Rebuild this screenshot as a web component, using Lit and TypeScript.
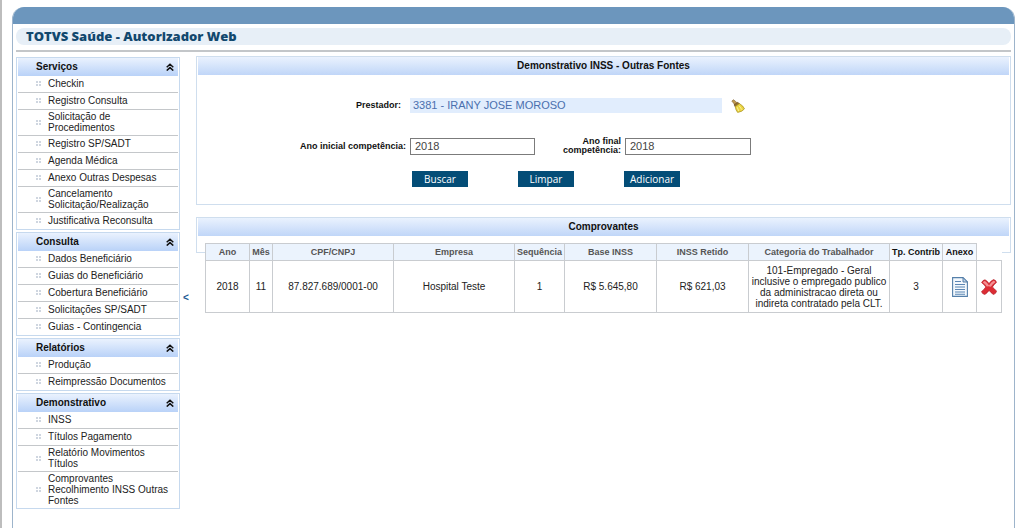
import { LitElement, html, css, svg } from "lit";
import { customElement, state } from "lit/decorators.js";

interface MenuGroup {
  title: string;
  items: string[];
}

const MENU: MenuGroup[] = [
  {
    title: "Serviços",
    items: [
      "Checkin",
      "Registro Consulta",
      "Solicitação de Procedimentos",
      "Registro SP/SADT",
      "Agenda Médica",
      "Anexo Outras Despesas",
      "Cancelamento Solicitação/Realização",
      "Justificativa Reconsulta",
    ],
  },
  {
    title: "Consulta",
    items: [
      "Dados Beneficiário",
      "Guias do Beneficiário",
      "Cobertura Beneficiário",
      "Solicitações SP/SADT",
      "Guias - Contingencia",
    ],
  },
  { title: "Relatórios", items: ["Produção", "Reimpressão Documentos"] },
  {
    title: "Demonstrativo",
    items: [
      "INSS",
      "Títulos Pagamento",
      "Relatório Movimentos Títulos",
      "Comprovantes Recolhimento INSS Outras Fontes",
    ],
  },
];

const ROWS = [
  {
    ano: "2018",
    mes: "11",
    doc: "87.827.689/0001-00",
    empresa: "Hospital Teste",
    seq: "1",
    base: "R$ 5.645,80",
    retido: "R$ 621,03",
    categoria:
      "101-Empregado - Geral inclusive o empregado publico da administracao direta ou indireta contratado pela CLT.",
    contrib: "3",
  },
];

@customElement("side-menu")
class SideMenu extends LitElement {
  @state() private closed: string[] = [];

  static styles = css`
    :host {
      display: flex;
      flex-direction: column;
      gap: 2px;
    }
    .group {
      border: 1px solid #c6d9ee;
      background: #fff;
    }
    .head {
      display: flex;
      align-items: center;
      justify-content: space-between;
      box-sizing: border-box;
      width: 100%;
      height: 18px;
      margin: 0;
      padding: 0 4px 1px 18px;
      border: 0;
      border-left: 1px solid #fff;
      border-right: 1px solid #fff;
      background: linear-gradient(#eaf2fe, #b9d2f8);
      color: #111;
      font: bold 10px/16px "Liberation Sans", Arial, sans-serif;
      cursor: pointer;
    }
    .chevron {
      width: 8px;
      height: 8px;
    }
    .list {
      list-style: none;
      margin: 0;
      padding: 0 1px;
    }
    .item {
      display: flex;
      align-items: center;
      gap: 7px;
      box-sizing: border-box;
      min-height: 17px;
      padding: 1px 8px 2px 18px;
      border-bottom: 1px solid #c4c7ca;
    }
    .item:last-child {
      min-height: 16px;
      border-bottom: 0;
    }
    .dot {
      flex: none;
      width: 5px;
      height: 5px;
    }
    .link {
      color: #222;
      text-decoration: none;
      font: 10px/11px "Liberation Sans", Arial, sans-serif;
    }
  `;

  private toggle(title: string) {
    this.closed = this.closed.includes(title)
      ? this.closed.filter((t) => t !== title)
      : [...this.closed, title];
  }

  render() {
    return MENU.map(
      (g) => html`<section class="group">
        <button class="head" @click=${() => this.toggle(g.title)}>
          ${g.title}
          <svg class="chevron" viewBox="0 0 8 8" fill="none" stroke="#111" stroke-width="1.5">
            <path d="M.7 4.2 4 1.2l3.3 3M.7 7.6 4 4.6l3.3 3" />
          </svg>
        </button>
        ${this.closed.includes(g.title)
          ? null
          : html`<ul class="list">
              ${g.items.map(
                (i) => html`<li class="item">
                  <svg class="dot" viewBox="0 0 5 5" fill="#cfd6e0">
                    <path d="M0 0h2v2H0zM3 0h2v2H3zM0 3h2v2H0zM3 3h2v2H3z" />
                  </svg>
                  <a class="link" href="#">${i}</a>
                </li>`
              )}
            </ul>`}
      </section>`
    );
  }
}

const broomIcon = svg`
  <path d="M.8 2 2.600.7 6.500 4.200 4.200 6.200Z" fill="#c09a50" stroke="#80602c" stroke-width=".6" />
  <path d="M3 5.800 6.800 3.200 8.600 5 4.400 8Z" fill="#94702f" stroke="#6a4c1c" stroke-width=".6" />
  <path d="M4.200 7.600 8.400 4.600Q12 6.500 13.500 9.800 11.500 12.800 6.600 13.400 4.600 11 4.200 7.600Z" fill="#ead440" stroke="#a58e22" stroke-width=".7" />
  <path d="M6.200 8.200 7.800 12.200M8.200 6.800 11 10.800" stroke="#fbf3a0" stroke-width=".9" fill="none" />
`;

const sheetIcon = svg`
  <path d="M.6.6H11L15.400 5V19.400H.6Z" fill="#f3f8fd" stroke="#5580aa" stroke-width="1.100" />
  <path d="M11 .6V5h4.400Z" fill="#c3d8ec" stroke="#4a74a0" stroke-width=".9" />
  <path d="M3 4.500h6M3 7.500h10M3 10h10M3 12.500h10M3 15h10M3 17.200h10" stroke="#5b86b4" stroke-width="1.100" />
`;

const crossIcon = svg`
  <path d="M.6 3.600Q1.800 1 4 .8 6.400 2 8 4.600 10 1.600 12.600.6 15 1.200 15.500 3.400 13.200 5 11.400 8 13.600 10 15.600 12.200 14.800 15 12.400 15.500 10 13.800 8.100 11.400 6.200 14 3.800 15.500 1.200 15 .5 12.600 3 10.800 4.800 8 3 5.400.6 3.600Z" fill="#dc2c34" stroke="#b3202a" stroke-width=".7" />
  <path d="M1.800 3.500Q2.600 2 3.900 1.900 6 3.200 8 6.400 10.200 3 12.600 1.700 14 2 14.300 3.200 11.600 4.800 9.800 7.800 7.500 6.600 5.800 7.600 4.300 5 1.800 3.500Z" fill="#f58f92" />
`;

@customElement("app-root")
class AppRoot extends LitElement {
  @state() private menuOpen = true;

  static styles = css`
    :host {
      display: block;
      box-sizing: border-box;
      min-height: 100vh;
      padding: 7px 8px 0 10px;
      border-left: 2px solid #bdbdbd;
      background: #fff;
      color: #222;
      font: 10px/11px "Liberation Sans", Arial, sans-serif;
    }
    .frame {
      box-sizing: border-box;
      min-height: calc(100vh - 7px);
      border: 1px solid #9db4cb;
      border-top: 0;
      border-bottom: 0;
      border-radius: 12px 12px 0 0;
      overflow: hidden;
    }
    .bar {
      height: 17px;
      background: #6c96bd;
    }
    .body {
      padding: 4px 3px 0;
    }
    .title {
      margin: 0;
      padding: 0 10px;
      border-radius: 8px;
      background: #e7eff7;
      color: #12486e;
      font: 800 13px/17px "Open Sans", Verdana, sans-serif;
    }
    .rule {
      height: 2px;
      margin: 5px 0 4px;
      background: #c3c6c9;
    }
    .columns {
      display: flex;
      align-items: flex-start;
    }
    .menu {
      flex: none;
      width: 164px;
      margin-top: 1px;
    }
    .fold {
      flex: none;
      width: 16px;
      margin-top: 235px;
      padding: 0 5px 0 1px;
      border: 0;
      background: none;
      color: #1c5a94;
      font: bold 10px/13px "Liberation Sans", Arial, sans-serif;
      cursor: pointer;
    }
    .main {
      flex: 1;
      min-width: 0;
      display: flex;
      flex-direction: column;
      gap: 12px;
    }
    .panel {
      border: 1px solid #cfdeee;
    }
    .caption {
      margin: 0 1px;
      background: linear-gradient(#eaf2fe, #c0d6f8);
      color: #111;
      text-align: center;
      font: bold 10px/18px "Liberation Sans", Arial, sans-serif;
    }
    .form {
      display: grid;
      grid-template-columns: 209px 125px 82px 126px 1fr;
      column-gap: 4px;
      align-items: center;
      padding: 23px 0 17px;
    }
    .label {
      text-align: right;
      color: #111;
      font: bold 9px/9px "Liberation Sans", Arial, sans-serif;
    }
    .label-wide {
      padding-right: 5px;
    }
    .provider {
      display: flex;
      align-items: center;
      gap: 9px;
      grid-column: 2 / -1;
    }
    .field {
      box-sizing: border-box;
      width: 100%;
      height: 17px;
      padding: 0 4px;
      border: 1px solid #7b7b7b;
      border-radius: 0;
      background: #fff;
      color: #444;
      font: 11px/15px "Liberation Sans", Arial, sans-serif;
    }
    .readonly {
      width: 312px;
      height: 15px;
      padding: 0 3px;
      border: 0;
      background: #e1edfd;
      color: #4a6fae;
    }
    .years {
      margin-top: 24px;
    }
    .actions {
      grid-column: 2 / -1;
      display: flex;
      gap: 50px;
      margin: 16px 0 0 2px;
    }
    .action {
      width: 56px;
      height: 16px;
      padding: 0;
      border: 0;
      background: #044d77;
      color: #fff;
      font: 10px/16px "Open Sans", sans-serif;
      cursor: pointer;
    }
    .icon-button {
      display: inline-flex;
      padding: 0;
      border: 0;
      background: none;
      vertical-align: middle;
      cursor: pointer;
    }
    .results {
      height: 34px;
    }
    .grid {
      width: calc(100% - 16px);
      margin: 7px 8px 0;
      border-collapse: collapse;
      table-layout: fixed;
      background: #fff;
      text-align: center;
    }
    .th {
      height: 16px;
      padding: 0;
      border: 1px solid #c9ccd0;
      background: #ebf3fd;
      color: #555;
      font-size: 9px;
      font-weight: bold;
      white-space: nowrap;
    }
    .th-dark {
      background: #f3f8fe;
      color: #111;
    }
    .td {
      height: 51px;
      padding: 0 1px;
      border: 1px solid #c9ccd0;
    }
    .td-icon {
      padding: 0;
    }
    .sheet {
      width: 16px;
      height: 20px;
      display: block;
    }
    .cross {
      width: 16px;
      height: 16px;
      display: block;
    }
    .broom {
      width: 14px;
      height: 14px;
      display: block;
    }
    .c-ano { width: 44px; }
    .c-mes { width: 23px; }
    .c-doc { width: 121px; }
    .c-seq { width: 50px; }
    .c-val { width: 92px; }
    .c-cat { width: 141px; }
    .c-con { width: 53px; }
    .c-ane { width: 34px; }
    .c-del { width: 25px; }
  `;

  render() {
    return html`<div class="frame">
      <div class="bar"></div>
      <div class="body">
        <h1 class="title">TOTVS Saúde - Autorizador Web</h1>
        <div class="rule"></div>
        <div class="columns">
          ${this.menuOpen ? html`<side-menu class="menu"></side-menu>` : null}
          <button class="fold" @click=${() => (this.menuOpen = !this.menuOpen)}>
            ${this.menuOpen ? "<" : ">"}
          </button>
          <main class="main">
            <section class="panel">
              <h2 class="caption">Demonstrativo INSS - Outras Fontes</h2>
              <form class="form" @submit=${(e: Event) => e.preventDefault()}>
                <label class="label label-wide" for="prestador">Prestador:</label>
                <div class="provider">
                  <input class="field readonly" id="prestador" readonly value="3381 - IRANY JOSE MOROSO" />
                  <button class="icon-button" type="reset" aria-label="Limpar prestador">
                    <svg class="broom" viewBox="0 0 14 14">${broomIcon}</svg>
                  </button>
                </div>
                <label class="label years" for="inicial">Ano inicial competência:</label>
                <input class="field years" id="inicial" value="2018" />
                <label class="label years" for="final">Ano final<br />competência:</label>
                <input class="field years" id="final" value="2018" />
                <div class="actions">
                  <button class="action" type="submit">Buscar</button>
                  <button class="action" type="reset">Limpar</button>
                  <button class="action" type="button">Adicionar</button>
                </div>
              </form>
            </section>
            <section class="panel results">
              <h2 class="caption">Comprovantes</h2>
              <table class="grid">
                <colgroup>
                  <col class="c-ano" />
                  <col class="c-mes" />
                  <col class="c-doc" />
                  <col />
                  <col class="c-seq" />
                  <col class="c-val" />
                  <col class="c-val" />
                  <col class="c-cat" />
                  <col class="c-con" />
                  <col class="c-ane" />
                  <col class="c-del" />
                </colgroup>
                <thead>
                  <tr>
                    ${["Ano", "Mês", "CPF/CNPJ", "Empresa", "Sequência", "Base INSS", "INSS Retido", "Categoria do Trabalhador"].map(
                      (h) => html`<th class="th">${h}</th>`
                    )}
                    <th class="th th-dark">Tp. Contrib</th>
                    <th class="th th-dark">Anexo</th>
                  </tr>
                </thead>
                <tbody>
                  ${ROWS.map(
                    (r) => html`<tr>
                      ${[r.ano, r.mes, r.doc, r.empresa, r.seq, r.base, r.retido, r.categoria, r.contrib].map(
                        (v) => html`<td class="td">${v}</td>`
                      )}
                      <td class="td td-icon">
                        <button class="icon-button" aria-label="Abrir anexo">
                          <svg class="sheet" viewBox="0 0 16 20">${sheetIcon}</svg>
                        </button>
                      </td>
                      <td class="td td-icon">
                        <button class="icon-button" aria-label="Excluir">
                          <svg class="cross" viewBox="0 0 16 16">${crossIcon}</svg>
                        </button>
                      </td>
                    </tr>`
                  )}
                </tbody>
              </table>
            </section>
          </main>
        </div>
      </div>
    </div>`;
  }
}
